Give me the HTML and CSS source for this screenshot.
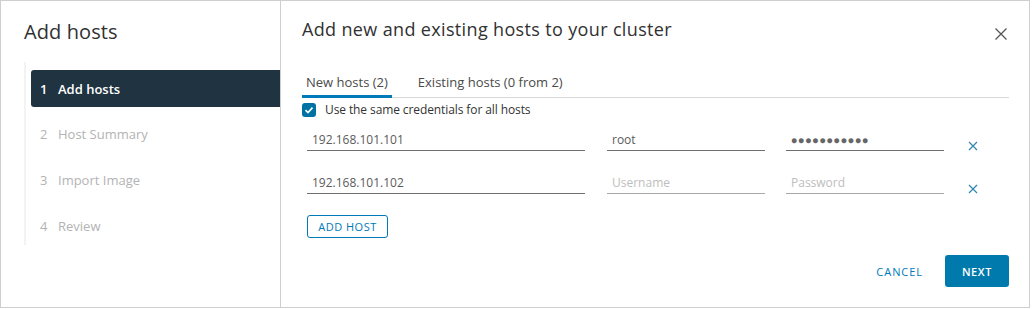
FILE: index.html
```html
<!DOCTYPE html>
<html>
<head>
<meta charset="utf-8">
<link rel="stylesheet" href="styles.css">
</head>
<body>
<div class="dialog">
  <aside class="side">
    <h2 class="side-title">Add hosts</h2>
    <ol class="steps">
      <li class="step active"><span class="num">1</span><span>Add hosts</span></li>
      <li class="step"><span class="num">2</span><span>Host Summary</span></li>
      <li class="step"><span class="num">3</span><span>Import Image</span></li>
      <li class="step"><span class="num">4</span><span>Review</span></li>
    </ol>
  </aside>
  <main class="main">
    <header class="head">
      <h1 class="title">Add new and existing hosts to your cluster</h1>
      <svg class="close" width="14" height="14" viewBox="0 0 14 14"><path d="M1.5 1.5L12.5 12.5M12.5 1.5L1.5 12.5" stroke="#565656" stroke-width="1.3" fill="none"/></svg>
    </header>
    <nav class="tabs">
      <span class="tab active">New hosts (2)</span>
      <span class="tab">Existing hosts (0 from 2)</span>
    </nav>
    <label class="check">
      <span class="box"><svg width="14" height="14" viewBox="0 0 14 14"><path d="M3.5 7.2L6 9.6L10.5 4.6" stroke="#fff" stroke-width="1.6" fill="none"/></svg></span>
      <span>Use the same credentials for all hosts</span>
    </label>
    <div class="rows">
      <div class="row">
        <div class="field ip"><span class="val">192.168.101.101</span></div>
        <div class="field user"><span class="val">root</span></div>
        <div class="field pass"><span class="val dots">●●●●●●●●●●●</span></div>
        <svg class="rm" width="10" height="10" viewBox="0 0 10 10"><path d="M1 1L9 9M9 1L1 9" stroke="#2f86b2" stroke-width="1.2" fill="none"/></svg>
      </div>
      <div class="row">
        <div class="field ip"><span class="val">192.168.101.102</span></div>
        <div class="field user light"><span class="ph">Username</span></div>
        <div class="field pass light"><span class="ph">Password</span></div>
        <svg class="rm" width="10" height="10" viewBox="0 0 10 10"><path d="M1 1L9 9M9 1L1 9" stroke="#2f86b2" stroke-width="1.2" fill="none"/></svg>
      </div>
    </div>
    <button class="btn-outline">ADD HOST</button>
    <footer class="foot">
      <button class="btn-link">CANCEL</button>
      <button class="btn-primary">NEXT</button>
    </footer>
  </main>
</div>
</body>
</html>
```
FILE: styles.css
```css
* { box-sizing: border-box; }
html, body { margin: 0; padding: 0; background: #fff; }
body { font-family: "Open Sans", "Lato", sans-serif; color: #313131; }
.dialog {
  width: 1030px; height: 308px;
  border: 1px solid #cfcfcf;
  display: flex;
}
.side {
  width: 280px; flex: none;
  border-right: 1px solid #cfcfcf;
  padding: 18px 0 0 23px;
}
.side-title {
  margin: 0; font-weight: 400; font-size: 20px; line-height: 26px; color: #313131;
  letter-spacing: 0.1px;
}
.steps {
  list-style: none; margin: 17px 0 0 0; padding: 8px 0 0 5px;
  border-left: 2px solid #f3f3f3;
  height: 183px;
}
.step {
  height: 46px; display: flex; align-items: center;
  padding-left: 9px; font-size: 13px; color: #b3b3b3;
  margin-bottom: 0;
}
.step .num { width: 18px; }
.step.active {
  height: 37px; margin-bottom: 4px;
  background: #1f3340; color: #fff; font-weight: 600;
  border-radius: 3px 0 0 3px;
}
.main {
  flex: 1; padding: 0 20px 0 21px; display: flex; flex-direction: column;
}
.head { display: flex; align-items: center; justify-content: space-between; height: 62px; padding-bottom: 6px; }
.title { margin: 0; font-weight: 400; font-size: 18px; color: #313131; letter-spacing: 0.35px; }
.close { margin-right: 1px; margin-top: 10px; }
.tabs {
  display: flex; gap: 22px; border-bottom: 1px solid #d8d8d8; height: 35px;
  align-items: flex-end;
}
.tab { font-size: 13px; color: #4a4a4a; padding: 0 4px 6px 4px; }
.tab.active { border-bottom: 3px solid #0079b8; padding-bottom: 4px; margin-bottom: -1px; }
.check { display: flex; align-items: center; gap: 9px; font-size: 12px; color: #333; margin-top: 4px; height: 15px; letter-spacing: -0.1px; }
.box { width: 14px; height: 14px; border-radius: 3px; background: #0072a3; display: flex; }
.rows { display: flex; flex-direction: column; gap: 17px; margin-top: 8px; padding-left: 5px; }
.row { display: flex; align-items: flex-end; height: 26px; }
.field { border-bottom: 1px solid #6f6f6f; height: 25px; font-size: 12px; padding: 0 6px 2px 5px; display: flex; align-items: flex-end; }
.field.light { border-bottom-color: #a8a8a8; }
.ip { width: 278px; }
.user { width: 158px; margin-left: 22px; }
.pass { width: 158px; margin-left: 21px; }
.val { color: #5b5b5b; }
.dots { font-size: 10px; letter-spacing: 1.1px; color: #666; line-height: 14px; padding-bottom: 1px; }
.ph { color: #bdbdbd; }
.rm { margin-left: 24px; margin-bottom: 0; }
.btn-outline {
  align-self: flex-start; margin: 21px 0 0 5px;
  height: 23px; width: 81px; border: 1px solid #0079b8; border-radius: 3px; background: #fff;
  color: #0079b8; font-family: inherit; font-size: 11px; letter-spacing: 0.5px; font-weight: 500;
}
.foot { display: flex; justify-content: flex-end; align-items: center; gap: 22px; margin-top: 17px; }
.btn-link { background: none; border: none; color: #0079b8; font-family: inherit; font-size: 11px; letter-spacing: 0.95px; font-weight: 500; padding: 0; }
.btn-primary {
  height: 32px; width: 64px; border: none; border-radius: 3px; background: #0079ad; color: #fff;
  font-family: inherit; font-size: 11px; font-weight: 600; letter-spacing: 0.6px;
}
```
